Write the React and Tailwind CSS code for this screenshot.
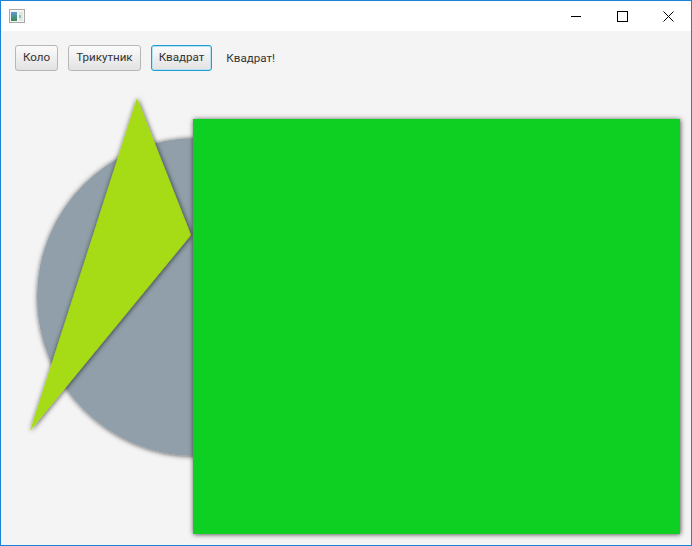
const buttons = [
  { label: "Коло", focused: false },
  { label: "Трикутник", focused: false },
  { label: "Квадрат", focused: true },
];

function AppIcon() {
  return (
    <svg width="16" height="15" viewBox="0 0 16 15">
      <rect x="0.5" y="0.5" width="15" height="13" fill="#f4f4f4" stroke="#a9a9a9" />
      <defs>
        <linearGradient id="ig" x1="0" y1="0" x2="0" y2="1">
          <stop offset="0" stopColor="#5b9bd5" />
          <stop offset="1" stopColor="#3a8a4a" />
        </linearGradient>
      </defs>
      <rect x="2" y="3" width="6" height="9" fill="url(#ig)" />
      <rect x="10" y="3" width="4" height="9" fill="#dfe9e4" />
      <rect x="10" y="6" width="2" height="3" fill="#8fc7a8" />
    </svg>
  );
}

function CaptionButtons() {
  return (
    <div className="flex h-full">
      <div className="w-[46px] h-full flex items-center justify-center">
        <svg width="10" height="10" viewBox="0 0 10 10">
          <path d="M0 5.5H10" stroke="#000" strokeWidth="1" />
        </svg>
      </div>
      <div className="w-[46px] h-full flex items-center justify-center">
        <svg width="11" height="11" viewBox="0 0 11 11">
          <rect x="0.5" y="0.5" width="10" height="10" fill="none" stroke="#000" strokeWidth="1" />
        </svg>
      </div>
      <div className="w-[46px] h-full flex items-center justify-center">
        <svg width="11" height="11" viewBox="0 0 11 11">
          <path d="M0.5 0.5L10.5 10.5M10.5 0.5L0.5 10.5" stroke="#000" strokeWidth="1" />
        </svg>
      </div>
    </div>
  );
}

export default function App() {
  return (
    <div
      className="w-[692px] h-[546px] border border-[#1883d7] flex flex-col bg-[#f4f4f4] overflow-hidden"
      style={{ fontFamily: 'Roboto, "Noto Sans", sans-serif' }}
    >
      <div className="h-[30px] bg-white flex items-center justify-between shrink-0">
        <div className="pl-[8px] pt-[1px]">
          <AppIcon />
        </div>
        <CaptionButtons />
      </div>

      <div className="h-[55px] shrink-0 flex items-start gap-[10px] pl-[14px] pt-[14px]">
        {buttons.map((b) => (
          <button
            key={b.label}
            className={`h-[26px] px-[7px] rounded-[3px] text-[11.6px] text-[#333] bg-gradient-to-b from-[#fbfbfb] to-[#e2e2e2] ${
              b.focused
                ? "border border-[#1f9bd6] shadow-[inset_0_0_0_1px_#b9e1f4]"
                : "border border-[#b7b7b7]"
            }`}
          >
            {b.label}
          </button>
        ))}
        <span className="text-[11.6px] text-[#333] leading-[26px] ml-[4px]">Квадрат!</span>
      </div>

      <svg className="block flex-1 w-full" viewBox="1 86 690 459">
        <defs>
          <filter id="ds" x="-20%" y="-20%" width="140%" height="140%">
            <feDropShadow dx="0.5" dy="0.5" stdDeviation="2.5" floodColor="#000" floodOpacity="0.7" />
          </filter>
        </defs>
        <circle cx="196" cy="297" r="159" fill="#909fa9" filter="url(#ds)" />
        <polygon points="137,98 191,235 30,431" fill="#a6dc12" filter="url(#ds)" />
        <rect x="193" y="119" width="487" height="415" fill="#0ad023" filter="url(#ds)" />
      </svg>
    </div>
  );
}
